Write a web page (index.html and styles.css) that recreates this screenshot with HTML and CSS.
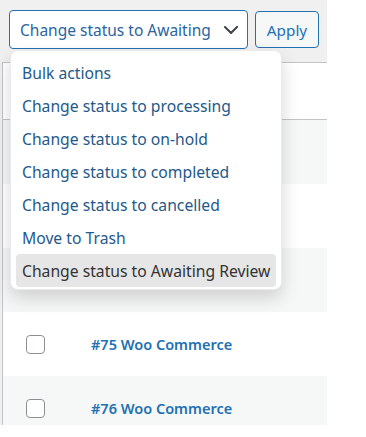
FILE: index.html
```html
<!DOCTYPE html>
<html>
<head>
<meta charset="utf-8">
<link rel="stylesheet" href="styles.css">
</head>
<body>
<div class="screen">
  <div class="toolbar">
    <div class="select">
      <span class="select-text">Change status to Awaiting</span>
      <svg class="chevron" width="14" height="8" viewBox="0 0 14 8"><path d="M1 1 L7 7 L13 1" fill="none" stroke="#3c434a" stroke-width="2" stroke-linecap="round" stroke-linejoin="round"/></svg>
    </div>
    <div class="apply">Apply</div>
  </div>
  <div class="table">
    <div class="thead"></div>
    <div class="row alt"></div>
    <div class="row"></div>
    <div class="row alt"></div>
    <div class="row"><span class="cb"></span><a class="order">#75 Woo Commerce</a></div>
    <div class="row alt"><span class="cb"></span><a class="order">#76 Woo Commerce</a></div>
  </div>
  <div class="menu">
    <div class="item">Bulk actions</div>
    <div class="item">Change status to processing</div>
    <div class="item">Change status to on-hold</div>
    <div class="item">Change status to completed</div>
    <div class="item">Change status to cancelled</div>
    <div class="item">Move to Trash</div>
    <div class="item active">Change status to Awaiting Review</div>
  </div>
</div>
</body>
</html>
```
FILE: styles.css
```css
html, body {
  margin: 0;
  padding: 0;
  background: #ffffff;
}
body {
  font-family: "Noto Sans", "Open Sans", sans-serif;
}
.screen {
  position: relative;
  width: 327px;
  height: 425px;
  background: #f0f0f1;
  overflow: hidden;
}
.toolbar {
  display: flex;
  align-items: flex-start;
  gap: 7px;
  padding: 10px 0 0 9px;
  height: 52px;
}
.select {
  box-sizing: border-box;
  width: 239px;
  height: 39px;
  border: 1px solid #2271b1;
  border-radius: 4px;
  background: #ffffff;
  display: flex;
  align-items: center;
  justify-content: space-between;
  padding: 0 9px 0 10px;
}
.select-text {
  font-size: 15.5px;
  color: #2a64a0;
  white-space: nowrap;
}
.chevron {
  display: block;
}
.apply {
  box-sizing: border-box;
  width: 64px;
  height: 37px;
  margin-top: 1px;
  border: 1px solid #2271b1;
  border-radius: 4px;
  background: #f6f7f7;
  color: #2271b1;
  font-size: 15.3px;
  display: flex;
  align-items: center;
  justify-content: center;
}
.table {
  margin-left: 2px;
  border-left: 1px solid #c3c4c7;
  border-top: 1px solid #c3c4c7;
}
.thead {
  height: 56px;
  background: #ffffff;
  border-bottom: 1px solid #c3c4c7;
}
.row {
  height: 64px;
  background: #ffffff;
  display: flex;
  align-items: center;
}
.row.alt {
  background: #f6f7f7;
}
.cb {
  box-sizing: border-box;
  width: 19px;
  height: 19px;
  margin-left: 23px;
  border: 1px solid #8c8f94;
  border-radius: 4px;
  background: #ffffff;
}
.order {
  margin-left: 46px;
  font-size: 14.5px;
  font-weight: 600;
  color: #2271b1;
}
.menu {
  position: absolute;
  left: 10px;
  top: 50px;
  box-sizing: border-box;
  width: 272px;
  height: 240px;
  padding: 5px 5px 4px;
  background: #ffffff;
  border: 1px solid rgba(0, 0, 0, 0.08);
  border-radius: 8px;
  box-shadow: 0 8px 18px rgba(0, 0, 0, 0.16);
}
.item {
  height: 33px;
  display: flex;
  align-items: center;
  padding-left: 6px;
  font-size: 15.7px;
  color: #24598a;
  border-radius: 4px;
  white-space: nowrap;
}
.item.active {
  background: #e6e6e6;
  color: #333333;
}
```
